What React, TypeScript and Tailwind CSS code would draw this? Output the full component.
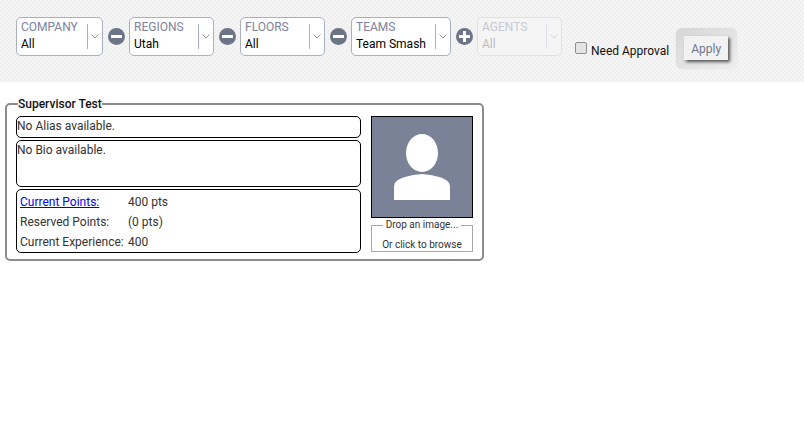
import React from "react";

interface FilterProps {
  label: string;
  value: string;
  width: string;
  disabled?: boolean;
}

function Filter({ label, value, width, disabled }: FilterProps) {
  return (
    <div
      className={`flex h-[39px] items-center rounded-[5px] border ${width} ${
        disabled ? "border-[#dfe0e7] bg-[#f5f5f5]" : "border-[#a9afc6] bg-white"
      }`}
    >
      <div className="flex min-w-0 flex-1 flex-col gap-[1px] pb-[3px] pl-[4px] text-[12px] leading-[16px]">
        <span className={disabled ? "text-[#c6c9d3]" : "text-[#7c82a0]"}>{label}</span>
        <span className={disabled ? "text-[#bdbdbd]" : "text-black"}>{value}</span>
      </div>
      <div className={`h-[25px] w-px ${disabled ? "bg-[#dfe0e7]" : "bg-[#a9afc6]"}`} />
      <div className="flex w-[14px] justify-center">
        <svg width="8" height="5" viewBox="0 0 8 5" fill="none">
          <path d="M0.5 0.5L4 4L7.5 0.5" stroke={disabled ? "#cfcfcf" : "#777"} strokeWidth="0.8" />
        </svg>
      </div>
    </div>
  );
}

function RoundIcon({ plus }: { plus?: boolean }) {
  return (
    <div className="flex h-[39px] items-center">
      <svg width="17" height="17" viewBox="0 0 17 17" className="mx-[4.5px] shrink-0">
        <circle cx="8.5" cy="8.5" r="8.5" fill="#6c7488" />
        <rect x="3" y="7" width="11" height="3" fill="#fff" />
        {plus && <rect x="7" y="3" width="3" height="11" fill="#fff" />}
      </svg>
    </div>
  );
}

function Row({ name, value, link }: { name: string; value: string; link?: boolean }) {
  return (
    <div className="flex h-[20px] items-center">
      <span className={`w-[108px] ${link ? "text-[#0000ee] underline" : ""}`}>{name}</span>
      <span>{value}</span>
    </div>
  );
}

export default function App() {
  return (
    <div className="min-h-[425px] bg-white font-['Roboto',sans-serif] text-[12px] text-[#333]">
      <div className="flex h-[82px] bg-[#f2f2f2] bg-[repeating-conic-gradient(#efefef_0%_25%,#f5f5f5_0%_50%)] bg-[length:4px_4px] pl-[16px] pt-[17px]">
        <Filter label="COMPANY" value="All" width="w-[87px]" />
        <RoundIcon />
        <Filter label="REGIONS" value="Utah" width="w-[85px]" />
        <RoundIcon />
        <Filter label="FLOORS" value="All" width="w-[85px]" />
        <RoundIcon />
        <Filter label="TEAMS" value="Team Smash" width="w-[100px]" />
        <RoundIcon plus />
        <Filter label="AGENTS" value="All" width="w-[85px]" disabled />
        <label className="ml-[13px] mt-[25px] flex h-[14px] items-start text-[#111]">
          <span className="h-[12px] w-[12px] rounded-[2px] border border-[#8f8f8f] bg-[#e4e4e4]" />
          <span className="ml-[4px] mt-[2px] leading-[14px]">Need Approval</span>
        </label>
        <div className="ml-[7px] mt-[11px] h-[41px] w-[61px] rounded-[6px] bg-gradient-to-br from-[#d6d6d6] to-[#eeeeee] pl-[8px] pt-[8px] shadow-[0_0_2px_#e8e8e8]">
          <button className="h-[24px] w-[44px] bg-[#f2f2f2] pt-[1px] text-[12px] text-[#6f7690] shadow-[2px_2px_3px_0_#555]">
            Apply
          </button>
        </div>
      </div>

      <fieldset className="ml-[5px] mt-[15px] h-[164px] w-[479px] rounded-[5px] border-2 border-[#8c8c8c] px-[9px]">
        <legend className="ml-[2px] text-[12px] font-medium leading-[14px] text-[#111]">Supervisor Test</legend>
        <div className="mt-[5px] flex gap-[10px]">
          <div className="flex w-[345px] flex-col gap-[2px]">
            <div className="h-[22px] rounded-[5px] border border-black leading-[18px]">No Alias available.</div>
            <div className="h-[47px] rounded-[5px] border border-black leading-[18px]">No Bio available.</div>
            <div className="h-[64px] rounded-[5px] border border-black px-[3px] pt-[2px]">
              <Row name="Current Points:" value="400 pts" link />
              <Row name="Reserved Points:" value="(0 pts)" />
              <Row name="Current Experience:" value="400" />
            </div>
          </div>
          <div className="w-[102px]">
            <div className="h-[102px] border border-black bg-[#7a8298]">
              <svg width="100" height="100" viewBox="0 0 100 100">
                <ellipse cx="50" cy="36" rx="16" ry="19" fill="#fff" />
                <path d="M22 83V70C22 63 30 59 50 57C70 59 78 63 78 70V83Z" fill="#fff" />
              </svg>
            </div>
            <fieldset className="mt-[1px] h-[33px] border border-[#a8a8a8] text-center text-[10px] leading-[12px]">
              <legend className="mx-auto px-[3px]">Drop an image...</legend>
              <div className="mt-[8px]">Or click to browse</div>
            </fieldset>
          </div>
        </div>
      </fieldset>
    </div>
  );
}
